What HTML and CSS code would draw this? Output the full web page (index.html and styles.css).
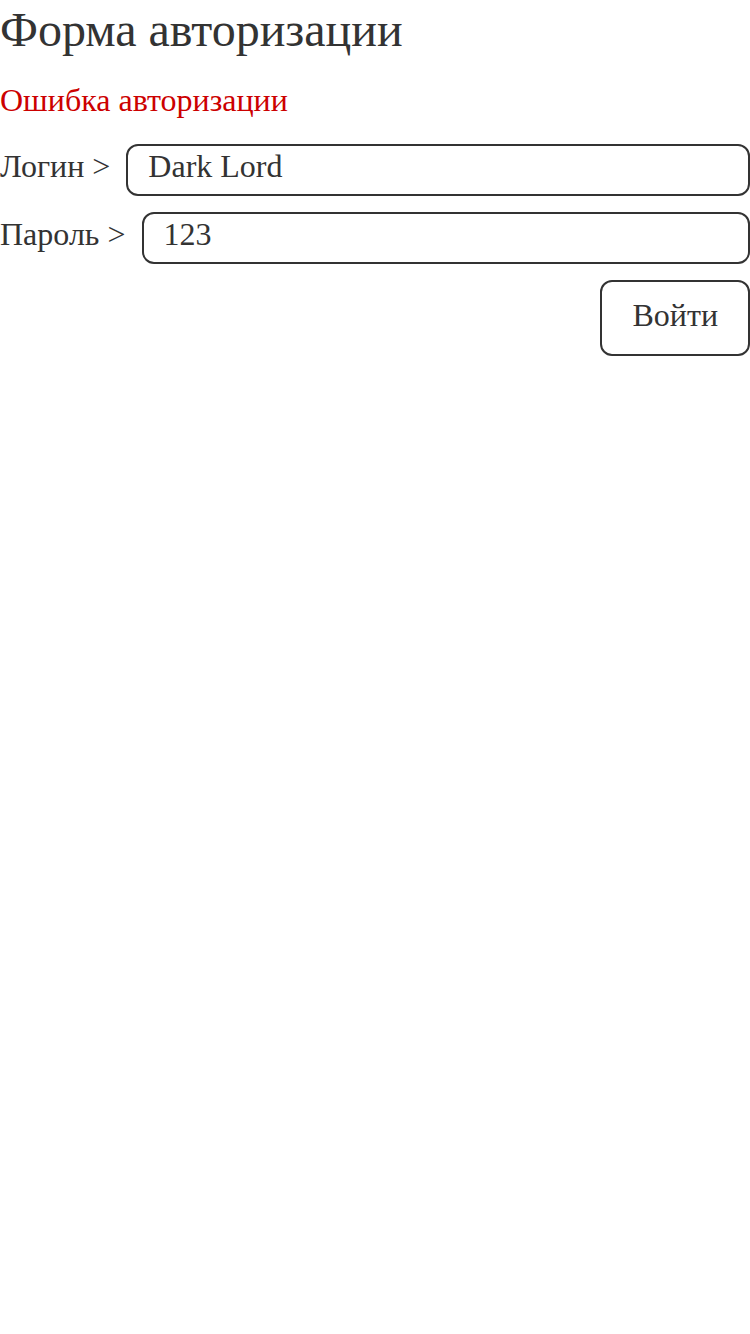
FILE: index.html
```html
<!DOCTYPE html>
<html lang="ru">
<head>
<meta charset="utf-8">
<title>Форма авторизации</title>
<link rel="stylesheet" href="styles.css">
</head>
<body>
<form class="auth">
  <h1 class="auth-title">Форма авторизации</h1>
  <p class="auth-error">Ошибка авторизации</p>
  <div class="auth-fields">
    <label class="auth-row">
      <span class="auth-label">Логин &gt;</span>
      <input class="auth-input" type="text" value="Dark Lord">
    </label>
    <label class="auth-row">
      <span class="auth-label">Пароль &gt;</span>
      <input class="auth-input" type="text" value="123">
    </label>
    <div class="auth-actions">
      <button class="auth-button" type="button">Войти</button>
    </div>
  </div>
</form>
</body>
</html>
```

FILE: styles.css
```css
html, body {
  margin: 0;
  padding: 0;
  background: #fff;
}

body {
  font-family: "Liberation Serif", "Times New Roman", serif;
  color: #333;
}

.auth-title {
  margin: 0;
  font-size: 48px;
  font-weight: normal;
  line-height: 60px;
}

.auth-error {
  margin: 22px 0 26px;
  font-size: 32px;
  line-height: 36px;
  color: #cc0000;
}

.auth-fields {
  display: flex;
  flex-direction: column;
  gap: 16px;
}

.auth-row {
  display: flex;
  align-items: baseline;
  gap: 16px;
}

.auth-label {
  font-size: 32px;
  line-height: 36px;
  white-space: nowrap;
}

.auth-input {
  flex: 1;
  min-width: 0;
  margin: 0;
  font-family: inherit;
  font-size: 32px;
  line-height: 36px;
  height: 52px;
  box-sizing: border-box;
  padding: 2px 20px 10px;
  border: 2px solid #333;
  border-radius: 12px;
  color: #333;
  background: #fff;
  outline: none;
}

.auth-actions {
  display: flex;
  justify-content: flex-end;
}

.auth-button {
  margin: 0;
  font-family: inherit;
  font-size: 32px;
  line-height: 36px;
  padding: 15px 30px 21px;
  border: 2px solid #333;
  border-radius: 12px;
  color: #333;
  background: #fff;
}
```
